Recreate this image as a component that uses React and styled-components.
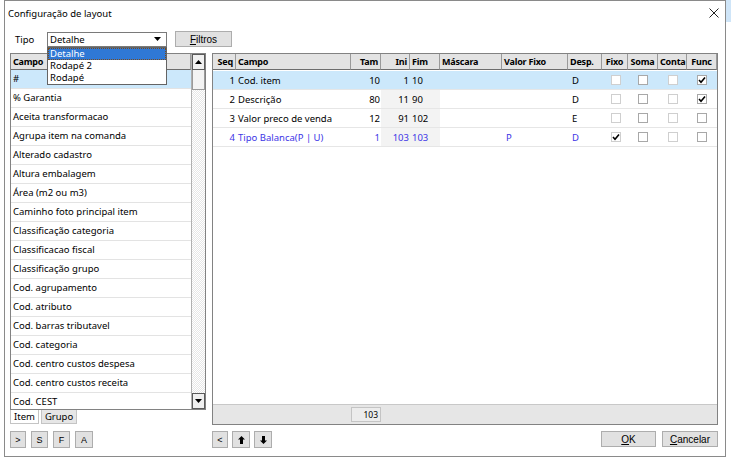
import React from "react";
import styled, { createGlobalStyle } from "styled-components";

const GlobalStyle = createGlobalStyle`
  html, body { margin: 0; padding: 0; }
  body {
    width: 731px;
    height: 461px;
    overflow: hidden;
    background: linear-gradient(#cfe5f8, #cfe5f8) right top / 5px 22px no-repeat, #fff;
    font-family: "Noto Sans", "Open Sans", sans-serif;
    font-size: 9.5px;
    color: #000;
  }
  * { box-sizing: border-box; }
`;

const Window = styled.div`
  margin-left: 4px;
  width: 722px;
  height: 457px;
  border: 1px solid #8a8a8a;
  background: #fff;
  display: flex;
  flex-direction: column;
`;

const TitleBar = styled.div`
  height: 24px;
  display: flex;
  align-items: center;
  justify-content: space-between;
  padding: 0 6px 0 3px;
  font-size: 9.5px;
`;

const Toolbar = styled.div`
  margin-top: 6px;
  height: 16px;
  display: flex;
  align-items: center;
  padding-left: 10px;
`;

const Label = styled.span`
  width: 32px;
`;

const Combo = styled.div`
  position: relative;
  width: 120px;
  height: 15px;
  border: 1px solid #7a7a7a;
  display: flex;
  align-items: center;
  justify-content: space-between;
  padding: 0 5px 0 2px;
`;

const DropList = styled.div`
  position: absolute;
  top: 14px;
  left: -1px;
  width: 120px;
  border: 1px solid #646464;
  background: #fff;
  z-index: 10;
`;

const DropItem = styled.div`
  height: 12px;
  line-height: 12px;
  padding-left: 2px;
  background: ${(p) => (p.$active ? "#2f78d5" : "#fff")};
  color: ${(p) => (p.$active ? "#fff" : "#000")};
  outline: ${(p) => (p.$active ? "1px dotted #7a4a1a" : "none")};
  outline-offset: -1px;
`;

const Button = styled.div`
  height: ${(p) => p.$h || 17}px;
  width: ${(p) => p.$w}px;
  border: 1px solid #adadad;
  background: #e1e1e1;
  display: flex;
  align-items: center;
  justify-content: center;
  font-size: ${(p) => p.$fs || 10}px;
  font-family: ${(p) => (p.$arial ? '"Liberation Sans", Arial, sans-serif' : "inherit")};
`;

const FilterButton = styled(Button)`
  margin-left: 8px;
`;

const Main = styled.div`
  margin-top: 6px;
  display: flex;
  gap: 6px;
  padding-left: 5px;
`;

const LeftPanel = styled.div`
  width: 196px;
  display: flex;
  flex-direction: column;
`;

const LeftGrid = styled.div`
  height: 357px;
  border: 1px solid #828282;
  display: flex;
  overflow: hidden;
`;

const ListCol = styled.div`
  flex: 1;
  overflow: hidden;
`;

const HeaderCell = styled.div`
  height: 16px;
  line-height: 15px;
  background: #e3e3e3;
  border-bottom: 1px solid #6d6d6d;
  border-right: 1px solid #9a9a9a;
  font-weight: 700;
  font-size: 9px;
  letter-spacing: -0.2px;
  padding: 0 2px;
  white-space: nowrap;
  overflow: hidden;
  text-align: ${(p) => p.$align || "left"};
`;

const ListRow = styled.div`
  height: 19px;
  line-height: 18px;
  padding-left: 2px;
  border-bottom: 1px solid #e3e3e3;
  background: ${(p) => (p.$sel ? "#cce8fb" : "#fff")};
  white-space: nowrap;
`;

const ScrollBar = styled.div`
  width: 14px;
  display: flex;
  flex-direction: column;
  border-left: 1px solid #b0b0b0;
  background: repeating-conic-gradient(#e6e6e6 0 25%, #fff 0 50%) 0 0 / 2px 2px;
`;

const ScrollBtn = styled.div`
  height: 16px;
  background: #f0f0f0;
  border: 1px solid #5a5a5a;
  display: flex;
  align-items: center;
  justify-content: center;
  margin-top: ${(p) => (p.$bottom ? "auto" : "0")};
`;

const Thumb = styled.div`
  height: 20px;
  background: #f3f3f3;
  border: 1px solid #9a9a9a;
  border-top: none;
`;

const Tabs = styled.div`
  display: flex;
  gap: 2px;
`;

const Tab = styled.div`
  height: 14px;
  line-height: 13px;
  padding: 0 3px;
  border: 1px solid #c4c4c4;
  border-top: none;
  background: ${(p) => (p.$active ? "#fff" : "#e6e6e6")};
`;

const RightGrid = styled.div`
  width: 506px;
  height: 372px;
  border: 1px solid #828282;
  display: flex;
  flex-direction: column;
`;

const COLS = "23px 115px 30px 29px 30px 62px 66px 34px 26px 30px 29px 30px";

const GridRow = styled.div`
  display: grid;
  grid-template-columns: ${COLS};
  height: ${(p) => p.$h || 19}px;
  border-bottom: ${(p) => (p.$line ? "1px solid #e6e6e6" : "none")};
  background: ${(p) => (p.$sel ? "#cce8fb" : "transparent")};
  color: ${(p) => (p.$blue ? "#3d35e6" : "#000")};
`;

const Cell = styled.div`
  display: flex;
  align-items: center;
  justify-content: ${(p) => p.$justify || "flex-start"};
  padding: 0 ${(p) => (p.$justify === "flex-end" ? "1px" : "0")} 0
    ${(p) => p.$pl ?? 2}px;
  white-space: nowrap;
  overflow: hidden;
  background: ${(p) => (p.$ro ? "#f3f3f3" : "transparent")};
`;

const EmptyArea = styled.div`
  flex: 1;
`;

const Footer = styled.div`
  display: grid;
  grid-template-columns: ${COLS};
  height: 20px;
  background: #e6e6e6;
  border-top: 1px solid #c8c8c8;
  align-items: center;
`;

const TotalBox = styled.div`
  grid-column: 3;
  height: 15px;
  border: 1px solid #c4c4c4;
  background: #ececec;
  font-size: 8.5px;
  text-align: right;
  padding-right: 2px;
  line-height: 13px;
`;

const Check = styled.div`
  width: 10px;
  height: 10px;
  border: 1px solid ${(p) => (p.$dim ? "#cfcfcf" : "#a8a8a8")};
  background: #fff;
  display: flex;
  align-items: center;
  justify-content: center;
`;

const BottomBar = styled.div`
  margin-top: 6px;
  height: 17px;
  display: flex;
  padding: 0 7px 0 5px;
`;

const BtnGroup = styled.div`
  display: flex;
  gap: ${(p) => p.$gap || 5}px;
  width: ${(p) => (p.$w ? `${p.$w}px` : "auto")};
`;

const Spacer = styled.div`
  flex: 1;
`;

const U = styled.span`
  text-decoration: underline;
`;

function Tri({ down }) {
  return (
    <svg width="7" height="4" viewBox="0 0 7 4">
      <polygon points={down ? "0,0 7,0 3.5,4" : "0,4 7,4 3.5,0"} fill="#000" />
    </svg>
  );
}

function Arrow({ down }) {
  return (
    <svg width="7" height="8" viewBox="0 0 7 8" style={{ transform: down ? "rotate(180deg)" : "none" }}>
      <path d="M3.5 0 L7 3.5 H5 V8 H2 V3.5 H0 Z" fill="#000" />
    </svg>
  );
}

function Tick() {
  return (
    <svg width="8" height="8" viewBox="0 0 8 8">
      <path d="M1 4 L3 6.2 L7 1.5" stroke="#000" strokeWidth="1.6" fill="none" />
    </svg>
  );
}

function Box({ on, dim }) {
  return <Check $dim={dim}>{on && <Tick />}</Check>;
}

const campos = [
  "#",
  "% Garantia",
  "Aceita transformacao",
  "Agrupa item na comanda",
  "Alterado cadastro",
  "Altura embalagem",
  "Área (m2 ou m3)",
  "Caminho foto principal item",
  "Classificação categoria",
  "Classificacao fiscal",
  "Classificação grupo",
  "Cod. agrupamento",
  "Cod. atributo",
  "Cod. barras tributavel",
  "Cod. categoria",
  "Cod. centro custos despesa",
  "Cod. centro custos receita",
  "Cod. CEST",
];

const layout = [
  { seq: 1, campo: "Cod. item", tam: 10, ini: 1, fim: 10, valor: "", desp: "D", fixo: false, func: true },
  { seq: 2, campo: "Descrição", tam: 80, ini: 11, fim: 90, valor: "", desp: "D", fixo: false, func: true },
  { seq: 3, campo: "Valor preco de venda", tam: 12, ini: 91, fim: 102, valor: "", desp: "E", fixo: false, func: false },
  { seq: 4, campo: "Tipo Balanca(P | U)", tam: 1, ini: 103, fim: 103, valor: "P", desp: "D", fixo: true, func: false, blue: true },
];

const headers = [
  ["Seq", "right"],
  ["Campo", "left"],
  ["Tam", "right"],
  ["Ini", "right"],
  ["Fim", "left"],
  ["Máscara", "left"],
  ["Valor Fixo", "left"],
  ["Desp.", "left"],
  ["Fixo", "center"],
  ["Soma", "center"],
  ["Conta", "center"],
  ["Func", "center"],
];

export default function App() {
  return (
    <>
      <GlobalStyle />
      <Window>
        <TitleBar>
          <span>Configuração de layout</span>
          <svg width="10" height="10" viewBox="0 0 10 10">
            <path d="M0.5 0.5 L9.5 9.5 M9.5 0.5 L0.5 9.5" stroke="#222" strokeWidth="1" />
          </svg>
        </TitleBar>

        <Toolbar>
          <Label>Tipo</Label>
          <Combo>
            <span>Detalhe</span>
            <Tri down />
            <DropList>
              <DropItem $active>Detalhe</DropItem>
              <DropItem>Rodapé 2</DropItem>
              <DropItem>Rodapé</DropItem>
            </DropList>
          </Combo>
          <FilterButton $w={57} $h={16} $arial $fs={10}>
            <U>F</U>iltros
          </FilterButton>
        </Toolbar>

        <Main>
          <LeftPanel>
            <LeftGrid>
              <ListCol>
                <HeaderCell>Campo</HeaderCell>
                {campos.map((c, i) => (
                  <ListRow key={c} $sel={i === 0}>
                    {c}
                  </ListRow>
                ))}
              </ListCol>
              <ScrollBar>
                <ScrollBtn>
                  <Tri />
                </ScrollBtn>
                <Thumb />
                <ScrollBtn $bottom>
                  <Tri down />
                </ScrollBtn>
              </ScrollBar>
            </LeftGrid>
            <Tabs>
              <Tab $active>Item</Tab>
              <Tab>Grupo</Tab>
            </Tabs>
          </LeftPanel>

          <RightGrid>
            <GridRow $h={17}>
              {headers.map(([h, a]) => (
                <HeaderCell key={h} $align={a}>
                  {h}
                </HeaderCell>
              ))}
            </GridRow>
            {layout.map((r, i) => (
              <GridRow key={r.seq} $sel={i === 0} $blue={r.blue} $line>
                <Cell $justify="flex-end">{r.seq}</Cell>
                <Cell>{r.campo}</Cell>
                <Cell $justify="flex-end">{r.tam}</Cell>
                <Cell $justify="flex-end" $ro={i !== 0}>{r.ini}</Cell>
                <Cell $ro={i !== 0}>{r.fim}</Cell>
                <Cell />
                <Cell $pl={4}>{r.valor}</Cell>
                <Cell $pl={4}>{r.desp}</Cell>
                <Cell $justify="center">
                  <Box on={r.fixo} dim />
                </Cell>
                <Cell $justify="center" $pl={0}>
                  <Box />
                </Cell>
                <Cell $justify="center" $pl={0}>
                  <Box dim />
                </Cell>
                <Cell $justify="center" $pl={0}>
                  <Box on={r.func} />
                </Cell>
              </GridRow>
            ))}
            <EmptyArea />
            <Footer>
              <TotalBox>103</TotalBox>
            </Footer>
          </RightGrid>
        </Main>

        <BottomBar>
          <BtnGroup $w={202}>
            <Button $w={16} $fs={9} $arial>&gt;</Button>
            <Button $w={17} $fs={9} $arial>S</Button>
            <Button $w={17} $fs={9} $arial>F</Button>
            <Button $w={18} $fs={9} $arial>A</Button>
          </BtnGroup>
          <BtnGroup $gap={4}>
            <Button $w={16} $fs={9} $arial>&lt;</Button>
            <Button $w={18}>
              <Arrow />
            </Button>
            <Button $w={18}>
              <Arrow down />
            </Button>
          </BtnGroup>
          <Spacer />
          <BtnGroup $gap={6}>
            <Button $w={55} $h={16} $arial>
              <U>O</U>K
            </Button>
            <Button $w={56} $h={16} $arial>
              <U>C</U>ancelar
            </Button>
          </BtnGroup>
        </BottomBar>
      </Window>
    </>
  );
}
